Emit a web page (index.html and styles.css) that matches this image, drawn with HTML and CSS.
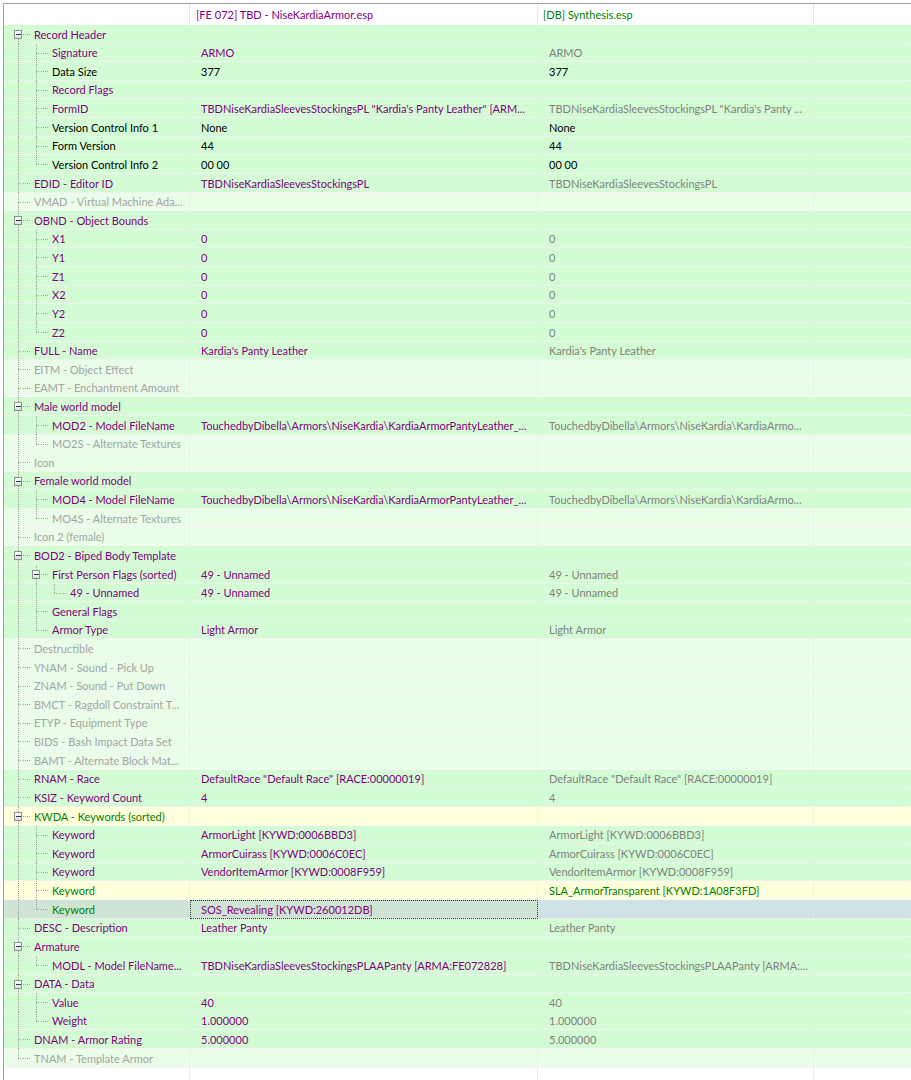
FILE: index.html
```html
<!DOCTYPE html>
<html>
<head>
<meta charset="utf-8">
<link rel="stylesheet" href="styles.css">
</head>
<body>
<div class="view">
  <div class="hd">
    <div class="h1"></div>
    <div class="h2">[FE 072] TBD - NiseKardiaArmor.esp</div>
    <div class="h3">[DB] Synthesis.esp</div>
    <div class="h4"></div>
  </div>

  <div class="row"><div class="c1"><i class="s bf"><b class="bx"></b></i><i class="cn"></i><span class="tx">Record Header</span></div><div class="c2"></div><div class="c3"></div><div class="c4"></div></div>
  <div class="row"><div class="c1"><i class="s v"></i><i class="s t"></i><i class="cn"></i><span class="tx">Signature</span></div><div class="c2">ARMO</div><div class="c3">ARMO</div><div class="c4"></div></div>
  <div class="row blk"><div class="c1"><i class="s v"></i><i class="s t"></i><i class="cn"></i><span class="tx">Data Size</span></div><div class="c2">377</div><div class="c3">377</div><div class="c4"></div></div>
  <div class="row"><div class="c1"><i class="s v"></i><i class="s t"></i><i class="cn"></i><span class="tx">Record Flags</span></div><div class="c2"></div><div class="c3"></div><div class="c4"></div></div>
  <div class="row"><div class="c1"><i class="s v"></i><i class="s t"></i><i class="cn"></i><span class="tx">FormID</span></div><div class="c2">TBDNiseKardiaSleevesStockingsPL "Kardia's Panty Leather" [ARM...</div><div class="c3">TBDNiseKardiaSleevesStockingsPL "Kardia's Panty ...</div><div class="c4"></div></div>
  <div class="row blk"><div class="c1"><i class="s v"></i><i class="s t"></i><i class="cn"></i><span class="tx">Version Control Info 1</span></div><div class="c2">None</div><div class="c3">None</div><div class="c4"></div></div>
  <div class="row blk"><div class="c1"><i class="s v"></i><i class="s t"></i><i class="cn"></i><span class="tx">Form Version</span></div><div class="c2">44</div><div class="c3">44</div><div class="c4"></div></div>
  <div class="row blk"><div class="c1"><i class="s v"></i><i class="s l"></i><i class="cn"></i><span class="tx">Version Control Info 2</span></div><div class="c2">00 00</div><div class="c3">00 00</div><div class="c4"></div></div>
  <div class="row"><div class="c1"><i class="s t"></i><i class="cn"></i><span class="tx">EDID - Editor ID</span></div><div class="c2">TBDNiseKardiaSleevesStockingsPL</div><div class="c3">TBDNiseKardiaSleevesStockingsPL</div><div class="c4"></div></div>
  <div class="row e"><div class="c1"><i class="s t"></i><i class="cn"></i><span class="tx">VMAD - Virtual Machine Ada...</span></div><div class="c2"></div><div class="c3"></div><div class="c4"></div></div>
  <div class="row"><div class="c1"><i class="s bm"><b class="bx"></b></i><i class="cn"></i><span class="tx">OBND - Object Bounds</span></div><div class="c2"></div><div class="c3"></div><div class="c4"></div></div>
  <div class="row"><div class="c1"><i class="s v"></i><i class="s t"></i><i class="cn"></i><span class="tx">X1</span></div><div class="c2">0</div><div class="c3">0</div><div class="c4"></div></div>
  <div class="row"><div class="c1"><i class="s v"></i><i class="s t"></i><i class="cn"></i><span class="tx">Y1</span></div><div class="c2">0</div><div class="c3">0</div><div class="c4"></div></div>
  <div class="row"><div class="c1"><i class="s v"></i><i class="s t"></i><i class="cn"></i><span class="tx">Z1</span></div><div class="c2">0</div><div class="c3">0</div><div class="c4"></div></div>
  <div class="row"><div class="c1"><i class="s v"></i><i class="s t"></i><i class="cn"></i><span class="tx">X2</span></div><div class="c2">0</div><div class="c3">0</div><div class="c4"></div></div>
  <div class="row"><div class="c1"><i class="s v"></i><i class="s t"></i><i class="cn"></i><span class="tx">Y2</span></div><div class="c2">0</div><div class="c3">0</div><div class="c4"></div></div>
  <div class="row"><div class="c1"><i class="s v"></i><i class="s l"></i><i class="cn"></i><span class="tx">Z2</span></div><div class="c2">0</div><div class="c3">0</div><div class="c4"></div></div>
  <div class="row"><div class="c1"><i class="s t"></i><i class="cn"></i><span class="tx">FULL - Name</span></div><div class="c2">Kardia's Panty Leather</div><div class="c3">Kardia's Panty Leather</div><div class="c4"></div></div>
  <div class="row e"><div class="c1"><i class="s t"></i><i class="cn"></i><span class="tx">EITM - Object Effect</span></div><div class="c2"></div><div class="c3"></div><div class="c4"></div></div>
  <div class="row e"><div class="c1"><i class="s t"></i><i class="cn"></i><span class="tx">EAMT - Enchantment Amount</span></div><div class="c2"></div><div class="c3"></div><div class="c4"></div></div>
  <div class="row"><div class="c1"><i class="s bm"><b class="bx"></b></i><i class="cn"></i><span class="tx">Male world model</span></div><div class="c2"></div><div class="c3"></div><div class="c4"></div></div>
  <div class="row"><div class="c1"><i class="s v"></i><i class="s t"></i><i class="cn"></i><span class="tx">MOD2 - Model FileName</span></div><div class="c2">TouchedbyDibella\Armors\NiseKardia\KardiaArmorPantyLeather_...</div><div class="c3">TouchedbyDibella\Armors\NiseKardia\KardiaArmo...</div><div class="c4"></div></div>
  <div class="row e"><div class="c1"><i class="s v"></i><i class="s l"></i><i class="cn"></i><span class="tx">MO2S - Alternate Textures</span></div><div class="c2"></div><div class="c3"></div><div class="c4"></div></div>
  <div class="row e"><div class="c1"><i class="s t"></i><i class="cn"></i><span class="tx">Icon</span></div><div class="c2"></div><div class="c3"></div><div class="c4"></div></div>
  <div class="row"><div class="c1"><i class="s bm"><b class="bx"></b></i><i class="cn"></i><span class="tx">Female world model</span></div><div class="c2"></div><div class="c3"></div><div class="c4"></div></div>
  <div class="row"><div class="c1"><i class="s v"></i><i class="s t"></i><i class="cn"></i><span class="tx">MOD4 - Model FileName</span></div><div class="c2">TouchedbyDibella\Armors\NiseKardia\KardiaArmorPantyLeather_...</div><div class="c3">TouchedbyDibella\Armors\NiseKardia\KardiaArmo...</div><div class="c4"></div></div>
  <div class="row e"><div class="c1"><i class="s v"></i><i class="s l"></i><i class="cn"></i><span class="tx">MO4S - Alternate Textures</span></div><div class="c2"></div><div class="c3"></div><div class="c4"></div></div>
  <div class="row e"><div class="c1"><i class="s t"></i><i class="cn"></i><span class="tx">Icon 2 (female)</span></div><div class="c2"></div><div class="c3"></div><div class="c4"></div></div>
  <div class="row"><div class="c1"><i class="s bm"><b class="bx"></b></i><i class="cn"></i><span class="tx">BOD2 - Biped Body Template</span></div><div class="c2"></div><div class="c3"></div><div class="c4"></div></div>
  <div class="row"><div class="c1"><i class="s v"></i><i class="s bm"><b class="bx"></b></i><i class="cn"></i><span class="tx">First Person Flags (sorted)</span></div><div class="c2">49 - Unnamed</div><div class="c3">49 - Unnamed</div><div class="c4"></div></div>
  <div class="row"><div class="c1"><i class="s v"></i><i class="s v"></i><i class="s l"></i><i class="cn"></i><span class="tx">49 - Unnamed</span></div><div class="c2">49 - Unnamed</div><div class="c3">49 - Unnamed</div><div class="c4"></div></div>
  <div class="row"><div class="c1"><i class="s v"></i><i class="s t"></i><i class="cn"></i><span class="tx">General Flags</span></div><div class="c2"></div><div class="c3"></div><div class="c4"></div></div>
  <div class="row"><div class="c1"><i class="s v"></i><i class="s l"></i><i class="cn"></i><span class="tx">Armor Type</span></div><div class="c2">Light Armor</div><div class="c3">Light Armor</div><div class="c4"></div></div>
  <div class="row e"><div class="c1"><i class="s t"></i><i class="cn"></i><span class="tx">Destructible</span></div><div class="c2"></div><div class="c3"></div><div class="c4"></div></div>
  <div class="row e"><div class="c1"><i class="s t"></i><i class="cn"></i><span class="tx">YNAM - Sound - Pick Up</span></div><div class="c2"></div><div class="c3"></div><div class="c4"></div></div>
  <div class="row e"><div class="c1"><i class="s t"></i><i class="cn"></i><span class="tx">ZNAM - Sound - Put Down</span></div><div class="c2"></div><div class="c3"></div><div class="c4"></div></div>
  <div class="row e"><div class="c1"><i class="s t"></i><i class="cn"></i><span class="tx">BMCT - Ragdoll Constraint T...</span></div><div class="c2"></div><div class="c3"></div><div class="c4"></div></div>
  <div class="row e"><div class="c1"><i class="s t"></i><i class="cn"></i><span class="tx">ETYP - Equipment Type</span></div><div class="c2"></div><div class="c3"></div><div class="c4"></div></div>
  <div class="row e"><div class="c1"><i class="s t"></i><i class="cn"></i><span class="tx">BIDS - Bash Impact Data Set</span></div><div class="c2"></div><div class="c3"></div><div class="c4"></div></div>
  <div class="row e"><div class="c1"><i class="s t"></i><i class="cn"></i><span class="tx">BAMT - Alternate Block Mat...</span></div><div class="c2"></div><div class="c3"></div><div class="c4"></div></div>
  <div class="row"><div class="c1"><i class="s t"></i><i class="cn"></i><span class="tx">RNAM - Race</span></div><div class="c2">DefaultRace "Default Race" [RACE:00000019]</div><div class="c3">DefaultRace "Default Race" [RACE:00000019]</div><div class="c4"></div></div>
  <div class="row"><div class="c1"><i class="s t"></i><i class="cn"></i><span class="tx">KSIZ - Keyword Count</span></div><div class="c2">4</div><div class="c3">4</div><div class="c4"></div></div>
  <div class="row y"><div class="c1"><i class="s bm"><b class="bx"></b></i><i class="cn"></i><span class="tx">KWDA - Keywords (sorted)</span></div><div class="c2"></div><div class="c3"></div><div class="c4"></div></div>
  <div class="row"><div class="c1"><i class="s v"></i><i class="s t"></i><i class="cn"></i><span class="tx">Keyword</span></div><div class="c2">ArmorLight [KYWD:0006BBD3]</div><div class="c3">ArmorLight [KYWD:0006BBD3]</div><div class="c4"></div></div>
  <div class="row"><div class="c1"><i class="s v"></i><i class="s t"></i><i class="cn"></i><span class="tx">Keyword</span></div><div class="c2">ArmorCuirass [KYWD:0006C0EC]</div><div class="c3">ArmorCuirass [KYWD:0006C0EC]</div><div class="c4"></div></div>
  <div class="row"><div class="c1"><i class="s v"></i><i class="s t"></i><i class="cn"></i><span class="tx">Keyword</span></div><div class="c2">VendorItemArmor [KYWD:0008F959]</div><div class="c3">VendorItemArmor [KYWD:0008F959]</div><div class="c4"></div></div>
  <div class="row y"><div class="c1"><i class="s v"></i><i class="s t"></i><i class="cn"></i><span class="tx">Keyword</span></div><div class="c2"></div><div class="c3">SLA_ArmorTransparent [KYWD:1A08F3FD]</div><div class="c4"></div></div>
  <div class="row sel"><div class="c1"><i class="s v"></i><i class="s l"></i><i class="cn"></i><span class="tx">Keyword</span></div><div class="c2">SOS_Revealing [KYWD:260012DB]</div><div class="c3"></div><div class="c4"></div></div>
  <div class="row"><div class="c1"><i class="s t"></i><i class="cn"></i><span class="tx">DESC - Description</span></div><div class="c2">Leather Panty</div><div class="c3">Leather Panty</div><div class="c4"></div></div>
  <div class="row"><div class="c1"><i class="s bm"><b class="bx"></b></i><i class="cn"></i><span class="tx">Armature</span></div><div class="c2"></div><div class="c3"></div><div class="c4"></div></div>
  <div class="row"><div class="c1"><i class="s v"></i><i class="s l"></i><i class="cn"></i><span class="tx">MODL - Model FileName...</span></div><div class="c2">TBDNiseKardiaSleevesStockingsPLAAPanty [ARMA:FE072828]</div><div class="c3">TBDNiseKardiaSleevesStockingsPLAAPanty [ARMA:...</div><div class="c4"></div></div>
  <div class="row"><div class="c1"><i class="s bm"><b class="bx"></b></i><i class="cn"></i><span class="tx">DATA - Data</span></div><div class="c2"></div><div class="c3"></div><div class="c4"></div></div>
  <div class="row"><div class="c1"><i class="s v"></i><i class="s t"></i><i class="cn"></i><span class="tx">Value</span></div><div class="c2">40</div><div class="c3">40</div><div class="c4"></div></div>
  <div class="row"><div class="c1"><i class="s v"></i><i class="s l"></i><i class="cn"></i><span class="tx">Weight</span></div><div class="c2">1.000000</div><div class="c3">1.000000</div><div class="c4"></div></div>
  <div class="row"><div class="c1"><i class="s t"></i><i class="cn"></i><span class="tx">DNAM - Armor Rating</span></div><div class="c2">5.000000</div><div class="c3">5.000000</div><div class="c4"></div></div>
  <div class="row e"><div class="c1"><i class="s l"></i><i class="cn"></i><span class="tx">TNAM - Template Armor</span></div><div class="c2"></div><div class="c3"></div><div class="c4"></div></div>

  <div class="fill"><div class="f1"></div><div class="f2"></div><div class="f3"></div><div class="f4"></div></div>
</div>
</body>
</html>
```
FILE: styles.css
```css
html, body {
  margin: 0;
  padding: 0;
  background: #ffffff;
  height: 100%;
  overflow: hidden;
}

body {
  padding: 3px 0 0 3px;
  box-sizing: border-box;
  font-family: Lato, "Open Sans", sans-serif;
  font-size: 11px;
  color: #800080;
}

.view {
  --dv: repeating-linear-gradient(to bottom, #a0a0a0 0 1px, transparent 1px 2px);
  --dh: repeating-linear-gradient(to right, #a0a0a0 0 1px, transparent 1px 2px);
  --gh: repeating-linear-gradient(to right, #f6f6f6 0 1px, transparent 1px 2px);
  --gv: repeating-linear-gradient(to bottom, #e4eae4 0 1px, transparent 1px 2px);
  border-left: 1px solid #a0a0a0;
  border-top: 1px solid #a0a0a0;
  height: 100%;
  box-sizing: border-box;
  display: grid;
  grid-template-columns: 186px 348px 276px 1fr;
  grid-template-rows:
    21px
    19px 18px 19px 18px 19px 19px 18px 19px 19px 18px
    19px 18px 19px 19px 18px 19px 19px 18px 19px 18px
    19px 19px 18px 19px 18px 19px 19px 18px 19px 19px
    18px 19px 18px 19px 19px 18px 19px 18px 19px 19px
    18px 19px 19px 18px 19px 18px 19px 19px 18px 19px
    19px 18px 19px 18px 19px 19px
    1fr;
}

.hd, .row, .fill { display: contents; }

.hd > div {
  border-right: 1px solid #e5e5e5;
  white-space: nowrap;
  overflow: hidden;
  line-height: 21px;
  background: #fff;
}

.h2 { padding-left: 6px; color: #800080; }
.h3 { padding-left: 5px; color: #008000; }
.hd > .h4 { border-right: none; }

.row > div {
  background-color: #d4fcd4;
  background-image: var(--gh), var(--gv);
  background-size: 100% 1px, 1px 100%;
  background-position: 0 100%, 100% 0;
  background-repeat: no-repeat;
  padding-bottom: 1px;
  white-space: nowrap;
  overflow: hidden;
  box-sizing: border-box;
  display: flex;
  align-items: center;
  min-width: 0;
}

.row > .c4 {
  background-image: var(--gh);
  background-size: 100% 1px;
  background-position: 0 100%;
}

.row > .c1 { align-items: stretch; }

.c2, .c3 { padding-left: 11px; }

.c2 { color: #800080; }
.c3 { color: #808080; }

.tx { padding-left: 3px; align-self: center; }

/* tree guide lines */
.s {
  width: 18px;
  flex: none;
  display: flex;
  align-items: center;
  margin-bottom: -1px;
}

.v  { background: var(--dv) 14px 0 / 1px 100% no-repeat; }
.t  { background: var(--dh) 14px 50% / 4px 1px no-repeat, var(--dv) 14px 0 / 1px 100% no-repeat; }
.l  { background: var(--dh) 14px 50% / 4px 1px no-repeat, var(--dv) 14px 0 / 1px 50% no-repeat; }
.bf { background: var(--dv) 14px 100% / 1px 50% no-repeat; }
.bm { background: var(--dv) 14px 0 / 1px 100% no-repeat; }

.cn {
  width: 9px;
  flex: none;
  background: var(--dh) 1px 50% / 8px 1px no-repeat;
  margin-bottom: -1px;
}

.bx {
  width: 9px;
  height: 9px;
  margin-left: 10px;
  box-sizing: border-box;
  border: 1px solid #8f8f8f;
  background: linear-gradient(#ffffff, #dedede);
  display: flex;
  align-items: center;
  justify-content: center;
}

.bx::after {
  content: "";
  width: 5px;
  height: 1px;
  background: #1e3b5c;
}

/* row variants */
.row.blk > div { color: #000; }

.row.e > div { background-color: #e9fde9; }
.row.e > .c1 { color: #a4a4a4; }

.row.y > div { background-color: #ffffdc; }
.row.y > .c1, .row.y > .c3 { color: #008000; }

.row.sel > .c1 { background-color: #d0e4d3; color: #008000; }
.row.sel > .c2 { background-color: #d0e4d3; outline: 1px dotted #333; outline-offset: -1px; }
.row.sel > .c3, .row.sel > .c4 { background-color: #cfe2e6; }

.fill > div {
  background: #fff;
  border-right: 1px solid #ececec;
}
.fill > .f4 { border-right: none; }
```
